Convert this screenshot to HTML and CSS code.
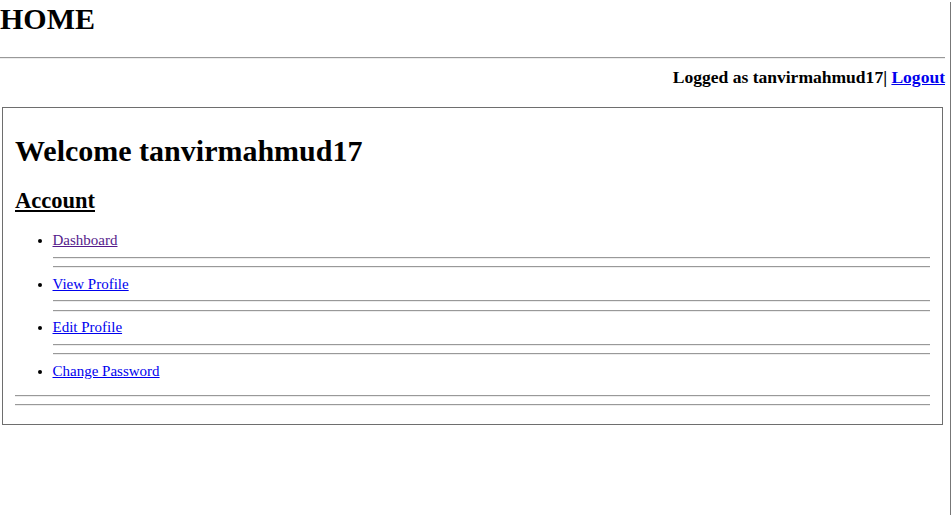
FILE: index.html
```html
<!DOCTYPE html>
<html>
<head>
<meta charset="utf-8">
<title>Home</title>
<link rel="stylesheet" href="styles.css">
</head>
<body>
<div class="page">
  <div class="main">
    <h1 class="site-title">HOME</h1>
    <hr>
    <div class="userbar">Logged as tanvirmahmud17| <a href="#">Logout</a></div>
    <fieldset class="panel">
      <h1 class="welcome">Welcome tanvirmahmud17</h1>
      <h2 class="section"><u>Account</u></h2>
      <ul class="menu">
        <li><a href="#" class="visited">Dashboard</a><hr><hr></li>
        <li><a href="#">View Profile</a><hr><hr></li>
        <li><a href="#">Edit Profile</a><hr><hr></li>
        <li><a href="#">Change Password</a></li>
      </ul>
      <hr><hr>
    </fieldset>
  </div>
</div>
</body>
</html>
```

FILE: styles.css
```css
html, body {
  margin: 0;
  padding: 0;
  background: #fff;
}
body {
  font-family: "Liberation Serif", "Times New Roman", serif;
  font-size: 15px;
  color: #000;
}
.page {
  width: 945px;
  padding-right: 5px;
  border-right: 1px solid #777;
  min-height: 100vh;
  box-sizing: content-box;
}
.main {
  width: 945px;
}
a {
  color: #0000ee;
}
a.visited {
  color: #551a8b;
}
hr {
  margin: 7.5px 0;
  border: none;
  border-top: 1px solid #999;
  border-bottom: 1px solid #ededed;
  height: 0;
}
.site-title {
  font-size: 30px;
  margin: 2px 0 21px;
}
.userbar {
  text-align: right;
  font-weight: bold;
  font-size: 17.55px;
  margin: 3px 0 19px;
}
.panel {
  margin: 0 2px;
  padding: 6px 12px 10px;
  border: 1px solid #6e6e6e;
  min-width: 0;
}
.welcome {
  font-size: 30px;
  margin: 20px 0;
}
.section {
  font-size: 22.5px;
  margin: 18.7px 0;
}
.menu {
  margin: 15px 0;
  padding-left: 37.5px;
}
```
